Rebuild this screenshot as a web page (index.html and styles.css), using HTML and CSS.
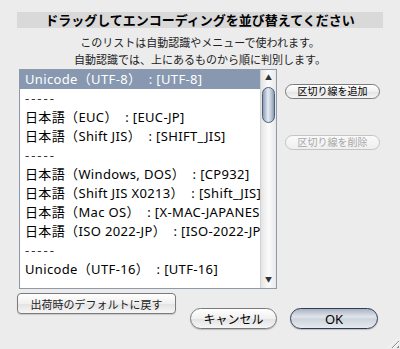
FILE: index.html
```html
<!DOCTYPE html>
<html lang="ja">
<head>
    <meta charset="UTF-8">
    <title>エンコーディングの並び替え</title>
    <link rel="stylesheet" href="styles.css">
</head>
<body>
    <div class="dialog">
        <div class="title">ドラッグしてエンコーディングを並び替えてください</div>
        <div class="note">
            <div>このリストは自動認識やメニューで使われます。</div>
            <div>自動認識では、上にあるものから順に判別します。</div>
        </div>

        <div class="main">
            <div class="list">
                <div class="rows">
                    <div class="row selected">Unicode（UTF-8）&nbsp; : [UTF-8]</div>
                    <div class="row sep">-----</div>
                    <div class="row">日本語（EUC）&nbsp; : [EUC-JP]</div>
                    <div class="row">日本語（Shift JIS）&nbsp; : [SHIFT_JIS]</div>
                    <div class="row sep">-----</div>
                    <div class="row">日本語（Windows, DOS）&nbsp; : [CP932]</div>
                    <div class="row">日本語（Shift JIS X0213）&nbsp; : [Shift_JIS]</div>
                    <div class="row">日本語（Mac OS）&nbsp; : [X-MAC-JAPANESE]</div>
                    <div class="row">日本語（ISO 2022-JP）&nbsp; : [ISO-2022-JP]</div>
                    <div class="row sep">-----</div>
                    <div class="row">Unicode（UTF-16）&nbsp; : [UTF-16]</div>
                </div>
                <div class="scrollbar">
                    <div class="arrow">▲</div>
                    <div class="track">
                        <div class="thumb"></div>
                    </div>
                    <div class="arrow">▼</div>
                </div>
            </div>

            <div class="side">
                <button class="btn small">区切り線を追加</button>
                <button class="btn small" disabled>区切り線を削除</button>
            </div>
        </div>

        <div class="footer">
            <button class="btn bevel">出荷時のデフォルトに戻す</button>
            <div class="actions">
                <button class="btn push">キャンセル</button>
                <button class="btn push default">OK</button>
            </div>
        </div>
    </div>
    <div class="grip"></div>
</body>
</html>
```

FILE: styles.css
```css
body {
    margin: 0;
    width: 400px;
    height: 349px;
    background-color: #ececec;
    font-family: "Noto Sans", "Noto Sans CJK JP", sans-serif;
    color: #000;
    position: relative;
    overflow: hidden;
}

.dialog {
    padding: 12px 17px 0;
}

.title {
    height: 16px;
    line-height: 16px;
    background-color: #d9d9d9;
    text-align: center;
    font-size: 13px;
    font-weight: bold;
}

.note {
    margin-top: 6px;
    text-align: center;
    font-size: 11px;
    line-height: 17px;
    color: #222;
}

.main {
    display: flex;
    margin-top: 1px;
    padding-left: 2px;
}

.list {
    width: 256px;
    height: 218px;
    border: 1px solid #8f99a9;
    box-shadow: inset 0 1px 1px rgba(0, 0, 0, 0.15);
    background-color: #ffffff;
    display: flex;
}

.rows {
    flex: 1;
    overflow: hidden;
    white-space: nowrap;
}

.row {
    height: 19px;
    line-height: 19px;
    padding-left: 5px;
    font-size: 13px;
    letter-spacing: 0.35px;
}

.row.selected {
    background-color: #8798b0;
    color: #ffffff;
}

.row.sep {
    letter-spacing: 2px;
    color: #333;
}

.scrollbar {
    width: 15px;
    border-left: 1px solid #d2d2d2;
    background: linear-gradient(to right, #e4e4e4, #fbfbfb 50%, #e8e8e8);
    display: flex;
    flex-direction: column;
}

.arrow {
    height: 16px;
    line-height: 16px;
    text-align: center;
    font-size: 7px;
    color: #333;
}

.track {
    flex: 1;
    padding: 1px 1px 0;
}

.thumb {
    height: 34px;
    border: 1px solid #4e5f7a;
    border-radius: 7px;
    background: linear-gradient(to right, #8a9bb2, #e6ecf3 45%, #c3cedb 70%, #8799b0);
}

.side {
    margin-left: 8px;
    padding-top: 15px;
    display: flex;
    flex-direction: column;
    gap: 36px;
}

.btn {
    font-family: inherit;
    color: #000;
    background: linear-gradient(#ffffff, #f0f0f0 50%, #e2e2e2 51%, #f6f6f6);
    border: 1px solid #7a7a7a;
    padding: 0;
    cursor: pointer;
}

.btn.small {
    width: 95px;
    height: 15px;
    border-radius: 8px;
    font-size: 10px;
    line-height: 13px;
}

.btn.small:disabled {
    color: #a8a8a8;
    border-color: #c4c4c4;
    background: linear-gradient(#fafafa, #efefef);
}

.footer {
    display: flex;
    align-items: flex-start;
    margin-top: 4px;
    padding-right: 5px;
}

.btn.bevel {
    width: 159px;
    height: 21px;
    border-radius: 4px;
    font-size: 11px;
    color: #222;
    box-shadow: 0 1px 1px rgba(0, 0, 0, 0.15);
}

.actions {
    margin-left: auto;
    margin-top: 15px;
    display: flex;
    gap: 13px;
}

.btn.push {
    width: 87px;
    height: 21px;
    border-radius: 11px;
    font-size: 12px;
    box-shadow: 0 1px 1px rgba(0, 0, 0, 0.2);
}

.btn.default {
    width: 88px;
    border-color: #2f3d5a;
    background: linear-gradient(#aab3c1, #dfe4ea 40%, #cfd5dd 55%, #e6eaef);
    font-size: 13px;
}

.grip {
    position: absolute;
    right: 1px;
    bottom: 1px;
    width: 11px;
    height: 11px;
    background: repeating-linear-gradient(135deg, transparent 0 2px, #8a8a8a 2px 3px, #ffffff 3px 4px);
    clip-path: polygon(100% 0, 100% 100%, 0 100%);
}
```
